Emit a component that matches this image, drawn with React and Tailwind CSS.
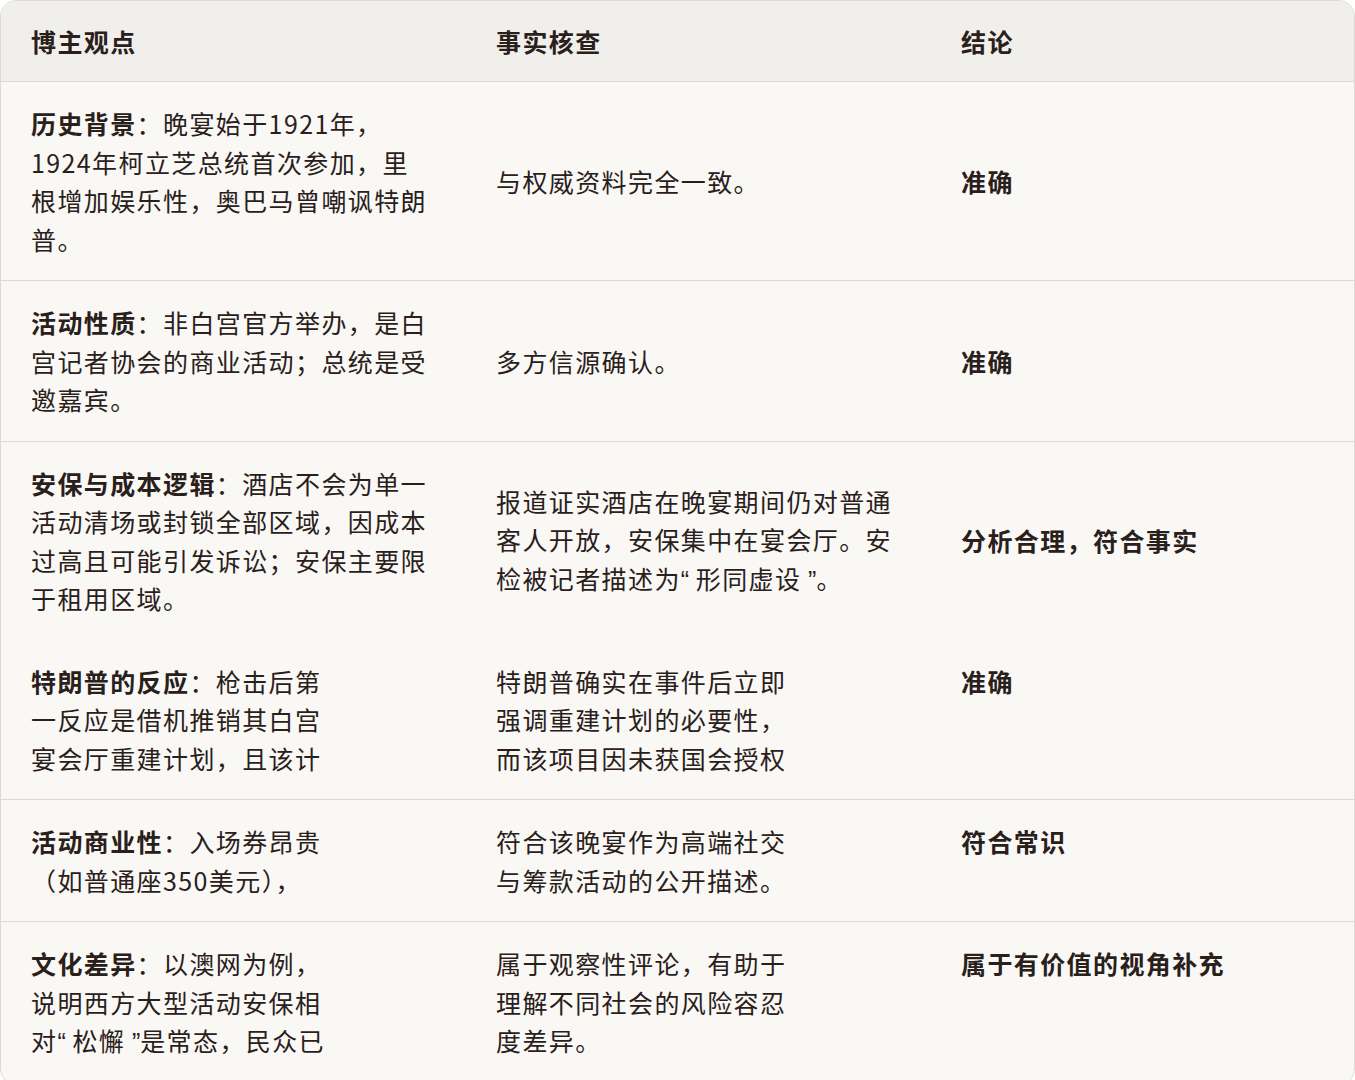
import React from 'react';

const FONT = { fontFamily: '"Noto Sans CJK SC", "Noto Sans", sans-serif' };

// Curly quotes sit in narrow boxes: opening one hugs the left, closing one the right
function Open() {
  return (
    <span className="inline-block w-[15px] text-left tracking-normal" style={{ fontFamily: '"Liberation Sans", sans-serif' }}>
      “
    </span>
  );
}
function Close() {
  return (
    <span className="inline-block w-[15px] text-right tracking-normal" style={{ fontFamily: '"Liberation Sans", sans-serif' }}>
      ”
    </span>
  );
}

const rows = [
  {
    label: '历史背景',
    text: '晚宴始于1921年，1924年柯立芝总统首次参加，里根增加娱乐性，奥巴马曾嘲讽特朗普。',
    check: '与权威资料完全一致。',
    verdict: '准确',
    center: true,
    border: true,
  },
  {
    label: '活动性质',
    text: '非白宫官方举办，是白宫记者协会的商业活动；总统是受邀嘉宾。',
    check: '多方信源确认。',
    verdict: '准确',
    center: true,
    border: true,
  },
  {
    label: '安保与成本逻辑',
    text: '酒店不会为单一活动清场或封锁全部区域，因成本过高且可能引发诉讼；安保主要限于租用区域。',
    check: (
      <>
        报道证实酒店在晚宴期间仍对普通客人开放，安保集中在宴会厅。安检被记者描述为<Open />形同虚设<Close />。
      </>
    ),
    verdict: '分析合理，符合事实',
    center: true,
    border: false,
  },
  {
    label: '特朗普的反应',
    text: '枪击后第一反应是借机推销其白宫宴会厅重建计划，且该计',
    check: '特朗普确实在事件后立即强调重建计划的必要性，而该项目因未获国会授权',
    verdict: '准确',
    narrow: true,
    border: true,
  },
  {
    label: '活动商业性',
    text: '入场券昂贵（如普通座350美元），',
    check: '符合该晚宴作为高端社交与筹款活动的公开描述。',
    verdict: '符合常识',
    narrow: true,
    border: true,
  },
  {
    label: '文化差异',
    text: (
      <>
        以澳网为例，说明西方大型活动安保相对<Open />松懈<Close />是常态，民众已
      </>
    ),
    check: '属于观察性评论，有助于理解不同社会的风险容忍度差异。',
    verdict: '属于有价值的视角补充',
    narrow: true,
    border: false,
  },
];

function Cell({ children, narrow, center }) {
  return (
    <div className={`px-[30px] py-[22px] flex ${center ? 'items-center' : 'items-start'}`}>
      <div className={narrow ? 'max-w-[302px]' : 'max-w-[399px]'}>{children}</div>
    </div>
  );
}

export default function App() {
  return (
    <div className="w-[1355px] h-[1080px] bg-white overflow-hidden" style={FONT}>
      <div className="rounded-2xl border border-[#dcdad4] overflow-hidden bg-[#f9f8f5] text-[#2a201b] text-[25px] leading-[38.5px] tracking-[1.4px]">
        <div className="grid grid-cols-[465px_465px_1fr] h-[81px] items-center bg-[#f0efeb] border-b border-[#dcdad4] font-bold">
          <div className="px-[30px]">博主观点</div>
          <div className="px-[30px]">事实核查</div>
          <div className="px-[30px]">结论</div>
        </div>
        {rows.map((r, i) => (
          <div
            key={i}
            className={`grid grid-cols-[465px_465px_1fr] ${r.border ? 'border-b border-[#dcdad4]' : ''}`}
          >
            <Cell narrow={r.narrow} center={r.center}>
              <p>
                <span className="font-bold">{r.label}</span>：{r.text}
              </p>
            </Cell>
            <Cell narrow={r.narrow} center={r.center}>
              <p>{r.check}</p>
            </Cell>
            <Cell narrow={r.narrow} center={r.center}>
              <p className="font-bold">{r.verdict}</p>
            </Cell>
          </div>
        ))}
      </div>
    </div>
  );
}
